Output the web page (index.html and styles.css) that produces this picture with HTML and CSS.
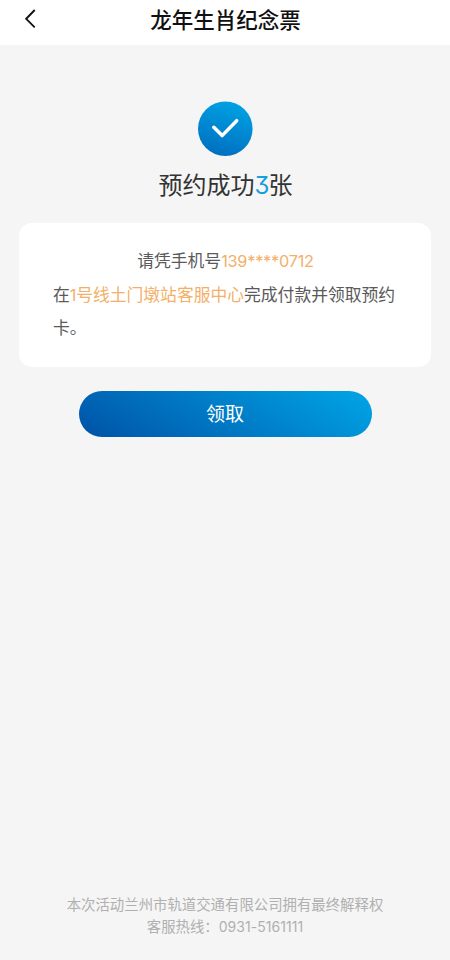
FILE: index.html
```html
<!DOCTYPE html>
<html lang="zh-CN">
<head>
<meta charset="utf-8">
<title>龙年生肖纪念票</title>
<link rel="stylesheet" href="styles.css">
</head>
<body>
<header class="bar">
  <svg class="back" width="14" height="22" viewBox="0 0 14 22"><path d="M11.7 2 3.2 10.8l8.5 8.5"/></svg>
  <h1 class="title">龙年生肖纪念票</h1>
</header>
<main class="main">
  <svg class="badge" width="56" height="56" viewBox="0 0 56 56">
    <defs><linearGradient id="blue" x1=".65" y1="0" x2=".35" y2="1"><stop offset="0" stop-color="#00a2e4"/><stop offset="1" stop-color="#006fc0"/></linearGradient></defs>
    <circle cx="28.3" cy="27.8" r="27.3" fill="url(#blue)"/>
    <path class="tick" d="m16.8 26.3 8.3 8.3 14.6-14.9"/>
  </svg>
  <h2 class="result">预约成功<span class="count">3</span>张</h2>
  <section class="card">
    <p class="phone">请凭手机号<span class="mark digits">139****0712</span></p>
    <p class="place">在<span class="mark"><span class="digits">1</span>号线土门墩站客服中心</span>完成付款并领取预约卡。</p>
  </section>
  <button class="claim">领取</button>
</main>
<footer class="foot">
  <p>本次活动兰州市轨道交通有限公司拥有最终解释权</p>
  <p>客服热线：<span class="digits hotline">0931-5161111</span></p>
</footer>
</body>
</html>
```
FILE: styles.css
```css
* { box-sizing: border-box; }
body { margin: 0; height: 960px; display: flex; flex-direction: column; background: #f5f5f5; font-family: "Noto Sans CJK SC", sans-serif; }
h1, h2, p { margin: 0; font-weight: 400; }
.bar { height: 45px; flex: none; background: #fff; display: grid; grid-template-columns: 48px 1fr 48px; align-items: center; padding-bottom: 7px; }
.back { margin-left: 23px; fill: none; stroke: #111; stroke-width: 1.9; }
.title { padding-left: 1px; text-align: center; font-size: 21.5px; line-height: 30px; font-weight: 500; color: #111; }
.main { flex: 1; display: flex; flex-direction: column; align-items: center; padding: 56px 19px 0; }
.tick { fill: none; stroke: #fff; stroke-width: 3.5; stroke-linecap: round; stroke-linejoin: round; }
.result { margin-top: 9px; padding-left: 1px; font-size: 24px; line-height: 36px; color: #333; }
.count { color: #169fdc; font-family: Inter, sans-serif; font-size: 24px; line-height: 1; letter-spacing: -1px; font-feature-settings: "cv09"; }
.card { width: 412px; height: 144px; margin-top: 20.5px; padding: 21.5px 34px; border-radius: 13px; background: #fff; color: #5a5a5a; font-size: 16.8px; line-height: 33.6px; }
.phone { padding-left: 1px; text-align: center; }
.mark { color: #f3b069; }
.digits { font-family: Inter, "Noto Sans CJK SC", sans-serif; font-size: .97em; line-height: 1; letter-spacing: -.014em; }
.hotline { letter-spacing: .005em; }
.claim { width: 293px; height: 46px; margin-top: 24.5px; padding: 0 0 3px; border: 0; border-radius: 23px; color: #fff; font: 400 19px/43px "Noto Sans CJK SC", sans-serif; background: linear-gradient(30deg, #0052a6, #00a6e7); }
.foot { padding-bottom: 23px; text-align: center; color: #b0b0b0; font-size: 14.4px; line-height: 22px; }
```
